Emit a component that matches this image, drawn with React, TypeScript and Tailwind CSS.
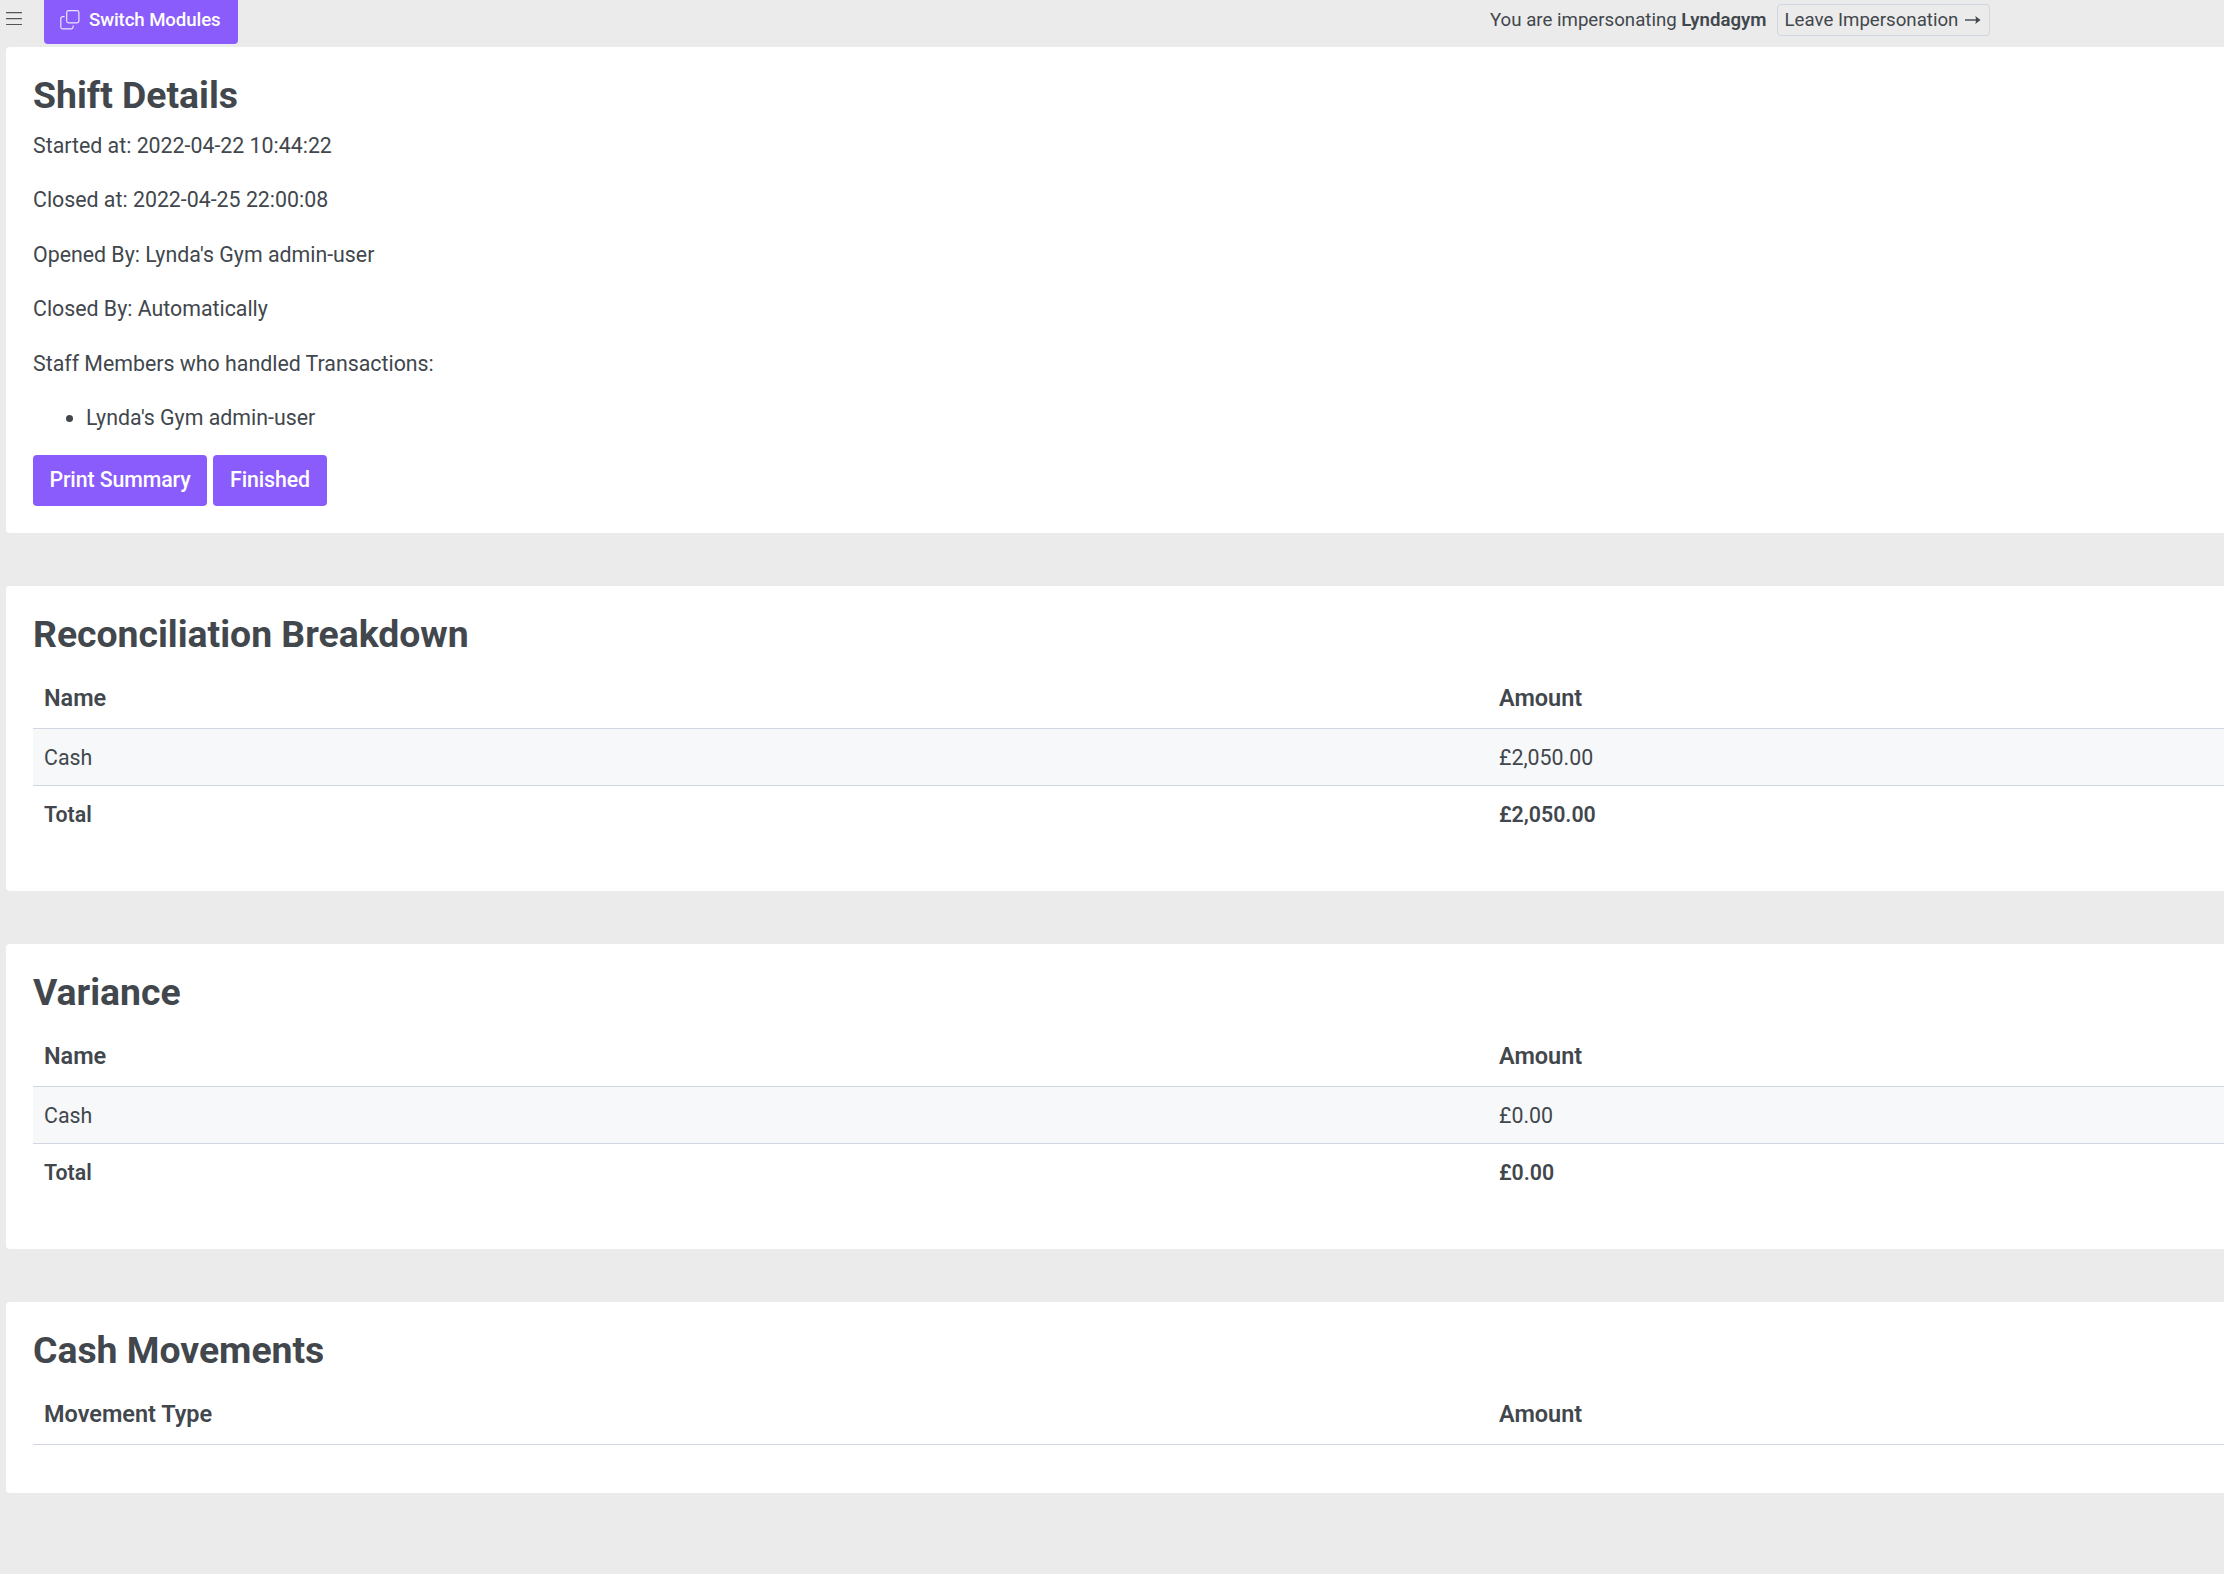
import type { ReactNode } from 'react'

interface Row {
  name: string
  amount: string
}

interface AmountTableProps {
  label: string
  rows?: Row[]
  total?: string
}

const details = [
  'Started at: 2022-04-22 10:44:22',
  'Closed at: 2022-04-25 22:00:08',
  "Opened By: Lynda's Gym admin-user",
  'Closed By: Automatically',
  'Staff Members who handled Transactions:',
]

function MenuIcon() {
  return (
    <svg width="16" height="14" viewBox="0 0 16 14" fill="none" stroke="#555555" strokeWidth="1.1" strokeLinecap="round">
      <path d="M.5 .6h15M.5 6.600h15M.5 12.500h15" />
    </svg>
  )
}

function ModulesIcon() {
  return (
    <svg width="20" height="20" viewBox="0 0 20 20" fill="none" stroke="#ece5ff" strokeWidth="1.2">
      <rect x="6.7" y=".7" width="12.2" height="12.2" rx="1.8" />
      <path d="M4.600 6.700H2.600A1.800 1.800 0 0 0 .8 8.500v8.600A1.800 1.800 0 0 0 2.600 18.900h8.700a1.800 1.800 0 0 0 1.800-1.800v-1.700" />
    </svg>
  )
}

function ArrowIcon() {
  return (
    <svg className="ml-[7px]" width="16" height="10" viewBox="0 0 16 10" fill="#41474d">
      <path d="M0 4.300h11V5.700H0Z" />
      <path d="M10.300 1 15.500 5l-5.200 4c.9-2.600.9-5.400 0-8Z" />
    </svg>
  )
}

function Card({ title, className, children }: { title: string; className: string; children: ReactNode }) {
  return (
    <section className={`rounded-l-[4px] bg-white pl-[27px] pt-[26px] ${className}`}>
      <h2 className="text-[37.33px] font-bold leading-[45px]">{title}</h2>
      {children}
    </section>
  )
}

function AmountTable({ label, rows = [], total }: AmountTableProps) {
  return (
    <table className="mt-[10px] w-full table-fixed border-collapse text-left">
      <thead>
        <tr className="h-[61px] border-b border-[#d1d7e0] text-[23.47px]">
          <th className="w-[1455px] px-[11px] pt-[2px] font-semibold">{label}</th>
          <th className="px-[11px] pt-[2px] font-semibold">Amount</th>
        </tr>
      </thead>
      <tbody>
        {rows.map((row) => (
          <tr key={row.name} className="h-[57.33px] border-b border-[#d1d7e0] bg-[#f7f8fa]">
            <td className="px-[11px] pt-[2px]">{row.name}</td>
            <td className="px-[11px] pt-[2px]">{row.amount}</td>
          </tr>
        ))}
        {total && (
          <tr className="h-[57px] font-semibold">
            <td className="px-[11px] pt-[2px]">Total</td>
            <td className="px-[11px] pt-[2px]">{total}</td>
          </tr>
        )}
      </tbody>
    </table>
  )
}

export default function App() {
  return (
    <div className="h-[1574px] w-full overflow-hidden bg-[#ebebeb] pl-[6px] font-['Roboto',sans-serif] text-[21.33px] leading-8 text-[#41474d]">
      {/* Top bar */}
      <header className="flex h-[47px] items-start">
        <button className="mt-[12px]" aria-label="Menu">
          <MenuIcon />
        </button>
        <button className="ml-[22px] flex h-[44px] w-[194px] items-center rounded-b-[4px] bg-[#8a5cfb] pb-[5px] pl-[16px] text-[18.67px] font-medium tracking-[-0.1px] text-white">
          <ModulesIcon />
          <span className="ml-[9px]">Switch Modules</span>
        </button>
        <div className="ml-[1252px] flex items-start text-[18.67px]">
          <p className="mt-[4px] leading-8">
            You are impersonating <strong className="font-semibold">Lyndagym</strong>
          </p>
          <button className="ml-[10px] mt-[4px] flex h-[32px] w-[213px] items-center rounded-[4px] border border-[#cfd6e0] pl-[7px]">
            Leave Impersonation
            <ArrowIcon />
          </button>
        </div>
      </header>

      <main className="flex flex-col gap-[53px]">
        <Card title="Shift Details" className="h-[486px]">
          <div className="mt-[12px] flex flex-col gap-[22.4px]">
            {details.map((line) => (
              <p key={line}>{line}</p>
            ))}
          </div>
          <ul className="mt-[22.4px] list-disc pl-[53px]">
            <li>Lynda's Gym admin-user</li>
          </ul>
          <div className="mt-[21px] flex gap-[6px] font-medium tracking-[-0.1px] text-white">
            <button className="h-[51px] w-[174px] rounded-[4px] bg-[#8a5cfb]">Print Summary</button>
            <button className="h-[51px] w-[114px] rounded-[4px] bg-[#8a5cfb]">Finished</button>
          </div>
        </Card>

        <Card title="Reconciliation Breakdown" className="h-[305px]">
          <AmountTable label="Name" rows={[{ name: 'Cash', amount: '£2,050.00' }]} total="£2,050.00" />
        </Card>

        <Card title="Variance" className="h-[305px]">
          <AmountTable label="Name" rows={[{ name: 'Cash', amount: '£0.00' }]} total="£0.00" />
        </Card>

        <Card title="Cash Movements" className="h-[191px]">
          <AmountTable label="Movement Type" />
        </Card>
      </main>
    </div>
  )
}
